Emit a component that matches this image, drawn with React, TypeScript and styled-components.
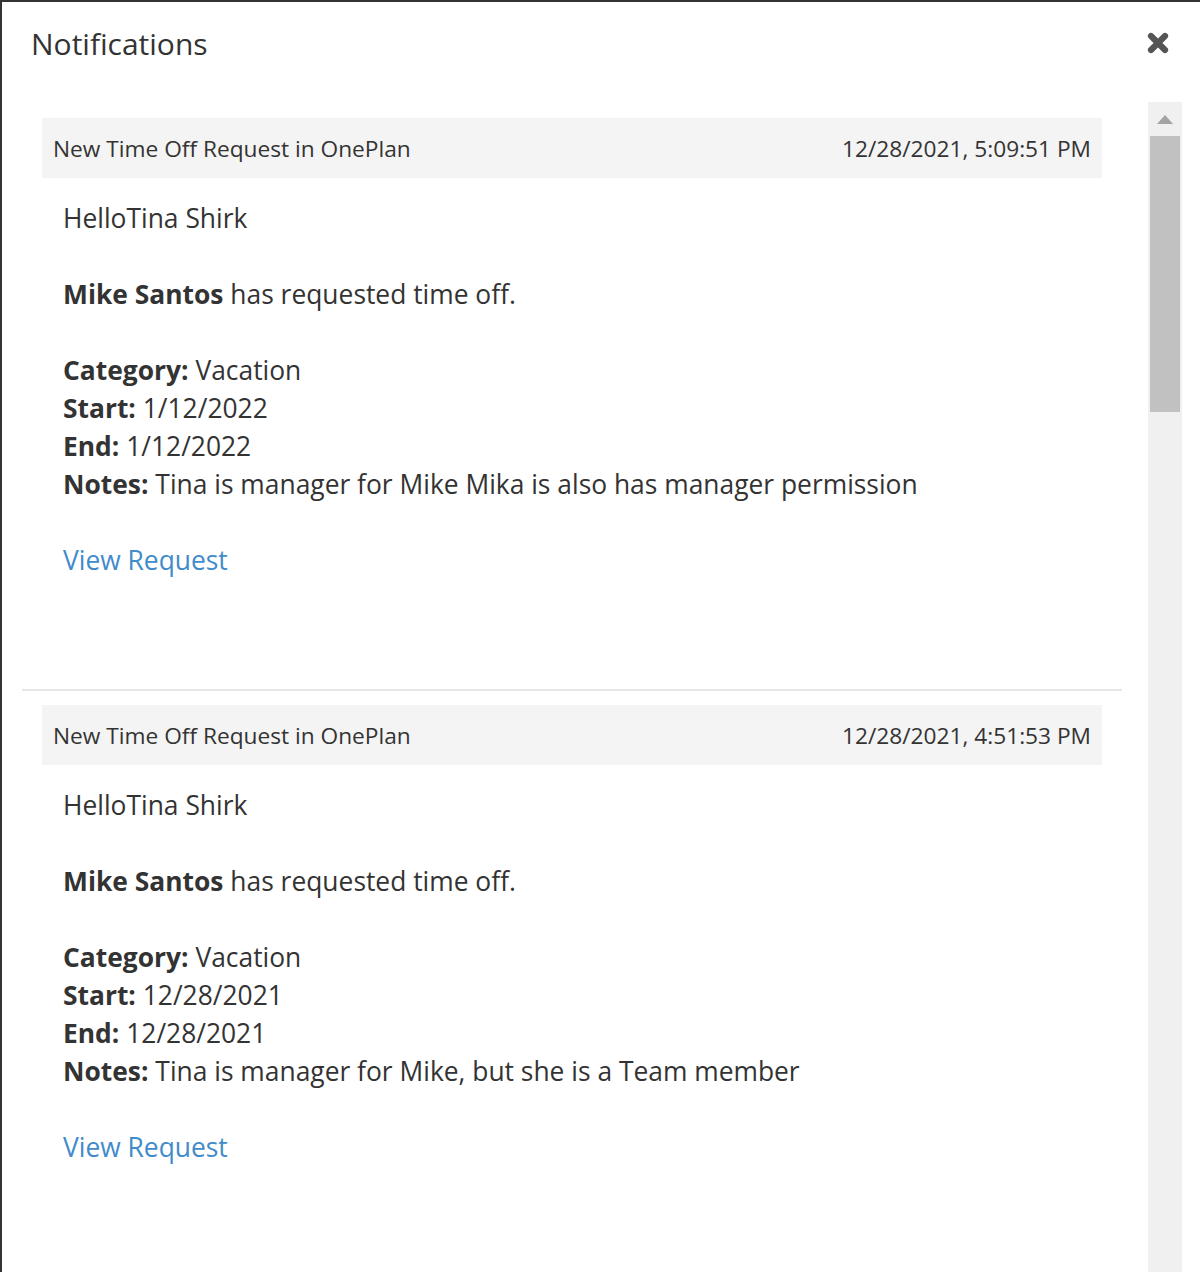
import React from "react";
import styled, { createGlobalStyle } from "styled-components";

const GlobalStyle = createGlobalStyle`
  html, body {
    margin: 0;
    padding: 0;
    background: #ffffff;
  }
  body {
    font-family: "Open Sans", "Noto Sans", "Liberation Sans", sans-serif;
    color: #333333;
  }
`;

const Modal = styled.div`
  box-sizing: border-box;
  width: 1200px;
  height: 1272px;
  border-top: 2px solid #333333;
  border-left: 2px solid #333333;
  background: #ffffff;
  display: flex;
  flex-direction: column;
  overflow: hidden;
`;

const TitleBar = styled.div`
  display: flex;
  align-items: flex-start;
  justify-content: space-between;
  height: 100px;
  padding: 0 31px 0 29px;
  box-sizing: border-box;
`;

const Title = styled.h1`
  margin: 22px 0 0 0;
  font-size: 30px;
  font-weight: 400;
  line-height: 40px;
  color: #333333;
`;

const CloseButton = styled.button`
  margin-top: 30px;
  padding: 0;
  border: none;
  background: transparent;
  width: 22px;
  height: 22px;
  cursor: pointer;
  display: flex;
`;

const Main = styled.div`
  flex: 1;
  display: flex;
  min-height: 0;
  padding-left: 20px;
`;

const List = styled.div`
  width: 1100px;
  display: flex;
  flex-direction: column;
  gap: 14px;
  padding-top: 16px;
  overflow: hidden;
`;

const Item = styled.div`
  padding: 0 20px;
  border-bottom: 2px solid #e6e6e6;
  flex-shrink: 0;
`;

const ItemHeader = styled.div`
  height: 60px;
  background: #f4f4f4;
  display: flex;
  align-items: center;
  justify-content: space-between;
  padding: 0 11px;
  font-size: 22.7px;
  color: #333333;
  white-space: nowrap;
`;

const ItemBody = styled.div`
  padding: 21px 21px 110px 21px;
  font-size: 26.4px;
  line-height: 38px;
  color: #333333;
  white-space: nowrap;
`;

const Line = styled.div`
  height: 38px;
`;

const Label = styled.b`
  font-weight: 700;
`;

const Link = styled.a`
  color: #428bca;
  text-decoration: none;
`;

const ScrollTrack = styled.div`
  margin-left: 26px;
  width: 34px;
  background: #f0f0f0;
  display: flex;
  flex-direction: column;
  align-items: center;
`;

const ArrowButton = styled.div`
  height: 34px;
  width: 34px;
  display: flex;
  align-items: center;
  justify-content: center;
`;

const Thumb = styled.div`
  width: 30px;
  height: 276px;
  background: #c1c1c1;
`;

type Notification = {
  title: string;
  date: string;
  start: string;
  end: string;
  notes: string;
};

const notifications: Notification[] = [
  {
    title: "New Time Off Request in OnePlan",
    date: "12/28/2021, 5:09:51 PM",
    start: "1/12/2022",
    end: "1/12/2022",
    notes: "Tina is manager for Mike Mika is also has manager permission",
  },
  {
    title: "New Time Off Request in OnePlan",
    date: "12/28/2021, 4:51:53 PM",
    start: "12/28/2021",
    end: "12/28/2021",
    notes: "Tina is manager for Mike, but she is a Team member",
  },
];

const CloseIcon = () => (
  <svg width="22" height="22" viewBox="0 0 22 22">
    <path
      d="M4 4 L18 18 M18 4 L4 18"
      stroke="#555555"
      strokeWidth="6.2"
      strokeLinecap="round"
    />
  </svg>
);

const UpArrow = () => (
  <svg width="16" height="9" viewBox="0 0 16 9">
    <path d="M8 0 L16 9 L0 9 Z" fill="#a3a3a3" />
  </svg>
);

export default function App() {
  return (
    <>
      <GlobalStyle />
      <Modal>
        <TitleBar>
          <Title>Notifications</Title>
          <CloseButton aria-label="Close">
            <CloseIcon />
          </CloseButton>
        </TitleBar>
        <Main>
          <List>
            {notifications.map((n, i) => (
              <Item key={i}>
                <ItemHeader>
                  <span>{n.title}</span>
                  <span>{n.date}</span>
                </ItemHeader>
                <ItemBody>
                  <Line>HelloTina Shirk</Line>
                  <Line />
                  <Line>
                    <Label>Mike Santos</Label> has requested time off.
                  </Line>
                  <Line />
                  <Line>
                    <Label>Category:</Label> Vacation
                  </Line>
                  <Line>
                    <Label>Start:</Label> {n.start}
                  </Line>
                  <Line>
                    <Label>End:</Label> {n.end}
                  </Line>
                  <Line>
                    <Label>Notes:</Label> {n.notes}
                  </Line>
                  <Line />
                  <Line>
                    <Link href="#">View Request</Link>
                  </Line>
                </ItemBody>
              </Item>
            ))}
          </List>
          <ScrollTrack>
            <ArrowButton>
              <UpArrow />
            </ArrowButton>
            <Thumb />
          </ScrollTrack>
        </Main>
      </Modal>
    </>
  );
}
